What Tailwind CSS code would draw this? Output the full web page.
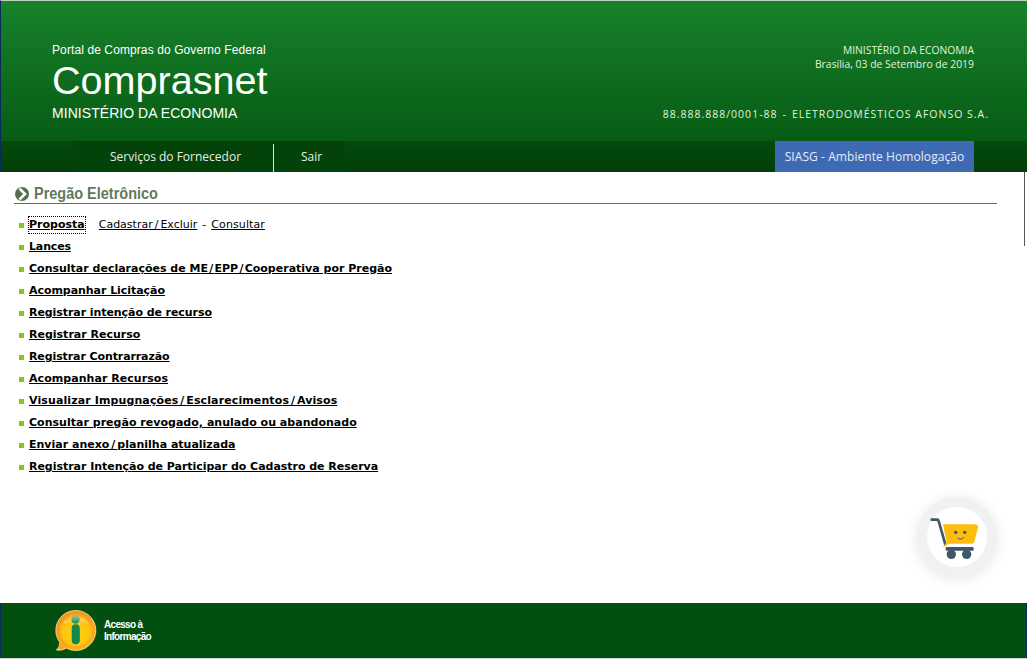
<!DOCTYPE html>
<html lang="pt-BR">
<head>
  <meta charset="UTF-8" />
  <title>Comprasnet</title>
  <script src="https://cdn.jsdelivr.net/npm/@tailwindcss/browser@4"></script>
</head>
<body class="relative h-[664px] overflow-hidden bg-white flex flex-col font-['DejaVu_Sans',sans-serif]">

  <!-- Cabecalho -->
  <header class="h-[141px] border-l border-[#0b2a5c] border-t border-t-[#c4cfc4] bg-gradient-to-b from-[#18822b] to-[#065c14] flex justify-between">
    <div class="pl-[51px] pt-[42px] text-white font-['Liberation_Sans',sans-serif]">
      <p class="text-[12px] leading-[14px] tracking-[0.1px]">Portal de Compras do Governo Federal</p>
      <p class="text-[39.6px] leading-[44px] mt-[1px]">Comprasnet</p>
      <p class="text-[14px] leading-[16px] mt-[3px] tracking-[0.05px]">MINISTÉRIO DA ECONOMIA</p>
    </div>
    <div class="pr-[38px] pt-[42px] flex flex-col items-end text-[#e2f2dc] font-['Open_Sans',sans-serif]">
      <p class="text-[10.3px] leading-[14px] mr-[15px]">MINISTÉRIO DA ECONOMIA</p>
      <p class="text-[10.4px] leading-[14px] mr-[15px]">Brasília, 03 de Setembro de 2019</p>
      <p class="text-[10.5px] leading-[14px] tracking-[1px] mt-[36px] flex">
        <span>88.888.888/0001-88</span><span class="mx-[5px]">-</span><span>ELETRODOMÉSTICOS AFONSO S.A.</span>
      </p>
    </div>
  </header>

  <!-- Menu -->
  <nav class="h-[31px] border-l border-[#0b2a5c] bg-gradient-to-b from-[#044a0e] to-[#023f08] flex font-['Open_Sans',sans-serif] text-[12px] text-[#e8efe8]">
    <div class="ml-[72px] w-[272px] flex bg-[#034209]">
      <a class="w-[200px] flex items-center justify-center pl-[5px]">Serviços do Fornecedor</a>
      <span class="w-px h-[28px] self-end bg-[#dfe8df]"></span>
      <a class="w-[71px] flex items-center pl-[27px]">Sair</a>
    </div>
    <div class="ml-[430px] w-[199px] bg-[#3e69b3] flex items-center justify-center text-[#e6edf8] tracking-[0.07px]">SIASG - Ambiente Homologação</div>
  </nav>

  <!-- Conteudo -->
  <main class="flex-1 relative pl-[14px] pr-[30px] pt-[13px]">
    <h1 class="flex items-center gap-[5px] h-[17px] mb-px text-[#5f7a5a] font-['Liberation_Sans',sans-serif] font-bold text-[16px]">
      <svg class="w-[14px] h-[14px] ml-px" viewBox="0 0 14 14">
        <circle cx="7" cy="7" r="7" fill="#56704f"/>
        <path d="M4.5 1.5 L10 7 L4.5 12.5" fill="none" stroke="#fff" stroke-width="2.6"/>
      </svg>
      <span class="scale-x-[0.905] origin-left">Pregão Eletrônico</span>
    </h1>
    <div class="h-px bg-[#5a7358]"></div>

    <ul class="mt-[10px] pl-[5px] text-[11px] text-black font-bold">
      <li class="h-[22px] flex items-center gap-[5px]"><span class="w-[5px] h-[5px] bg-[#8cc416]"></span><a class="underline outline-1 outline-dotted outline-black -outline-offset-1 px-px py-[1px] -mx-px">Proposta</a>
        <span class="ml-[9px] font-normal"><a class="underline">Cadastra<span class="tracking-[2px]">r/</span>Excluir</a><span class="mx-[1.5px]"> - </span><a class="underline tracking-[0.1px]">Consultar</a></span></li>
      <li class="h-[22px] flex items-center gap-[5px]"><span class="w-[5px] h-[5px] bg-[#8cc416]"></span><a class="underline tracking-[-0.15px]">Lances</a></li>
      <li class="h-[22px] flex items-center gap-[5px]"><span class="w-[5px] h-[5px] bg-[#8cc416]"></span><a class="underline">Consultar declarações de M<span class="tracking-[1.25px]">E/</span>EP<span class="tracking-[1.25px]">P/</span>Cooperativa por Pregão</a></li>
      <li class="h-[22px] flex items-center gap-[5px]"><span class="w-[5px] h-[5px] bg-[#8cc416]"></span><a class="underline tracking-[-0.05px]">Acompanhar Licitação</a></li>
      <li class="h-[22px] flex items-center gap-[5px]"><span class="w-[5px] h-[5px] bg-[#8cc416]"></span><a class="underline tracking-[-0.07px]">Registrar intenção de recurso</a></li>
      <li class="h-[22px] flex items-center gap-[5px]"><span class="w-[5px] h-[5px] bg-[#8cc416]"></span><a class="underline">Registrar Recurso</a></li>
      <li class="h-[22px] flex items-center gap-[5px]"><span class="w-[5px] h-[5px] bg-[#8cc416]"></span><a class="underline tracking-[-0.1px]">Registrar Contrarrazão</a></li>
      <li class="h-[22px] flex items-center gap-[5px]"><span class="w-[5px] h-[5px] bg-[#8cc416]"></span><a class="underline tracking-[0.05px]">Acompanhar Recursos</a></li>
      <li class="h-[22px] flex items-center gap-[5px]"><span class="w-[5px] h-[5px] bg-[#8cc416]"></span><a class="underline tracking-[0.11px]">Visualizar Impugnaçõe<span class="tracking-[2px]">s/</span>Esclarecimento<span class="tracking-[2px]">s/</span>Avisos</a></li>
      <li class="h-[22px] flex items-center gap-[5px]"><span class="w-[5px] h-[5px] bg-[#8cc416]"></span><a class="underline tracking-[0.02px]">Consultar pregão revogado, anulado ou abandonado</a></li>
      <li class="h-[22px] flex items-center gap-[5px]"><span class="w-[5px] h-[5px] bg-[#8cc416]"></span><a class="underline">Enviar anex<span class="tracking-[2px]">o/</span>planilha atualizada</a></li>
      <li class="h-[22px] flex items-center gap-[5px]"><span class="w-[5px] h-[5px] bg-[#8cc416]"></span><a class="underline tracking-[-0.03px]">Registrar Intenção de Participar do Cadastro de Reserva</a></li>
    </ul>

    <!-- linha da barra de rolagem -->
    <div class="absolute right-[2px] top-0 w-px h-[74px] bg-[#555]"></div>

    <!-- Carrinho flutuante -->
    <div class="absolute left-[917px] top-[325px] w-[80px] h-[80px] rounded-full bg-[#f1f1f1] shadow-[0_2px_14px_rgba(0,0,0,0.1)] flex items-center justify-center">
      <div class="w-[60px] h-[60px] rounded-full bg-white flex items-center justify-center">
        <svg class="w-[60px] h-[60px]" viewBox="80 80 180 180">
          <path d="M94 118 H110 Q114 118 115 122 L135 192" fill="none" stroke="#3f5767" stroke-width="8" stroke-linecap="round"/>
          <path d="M128 132 H224 Q233 132 233 142 L222 184 Q220 190 214 190 H146 L126 202 L139 186 Z" fill="#fdbd0b"/>
          <circle cx="166" cy="156" r="5" fill="#3f5767"/>
          <circle cx="193" cy="156" r="5" fill="#3f5767"/>
          <path d="M172 173 Q181 181 190 171" fill="none" stroke="#3f5767" stroke-width="3"/>
          <rect x="136" y="200" width="84" height="11" rx="3" fill="#3f5767"/>
          <circle cx="153" cy="222" r="14" fill="#3f5767"/>
          <circle cx="199" cy="222" r="14" fill="#3f5767"/>
          <rect x="168" y="212" width="17" height="10" fill="#fff"/>
        </svg>
      </div>
    </div>
  </main>

  <!-- Rodape -->
  <footer class="h-[55px] border-x border-[#0b2a5c] bg-[#024f10] flex items-center pl-[54px]">
    <svg class="w-[42px] h-[42px]" viewBox="0 0 44 44">
      <defs>
        <linearGradient id="bolha" x1="0.2" y1="0" x2="0.7" y2="1">
          <stop offset="0" stop-color="#f58f1e"/>
          <stop offset="1" stop-color="#fbb415"/>
        </linearGradient>
        <radialGradient id="miolo" cx="0.5" cy="0.6" r="0.55">
          <stop offset="0" stop-color="#ffd40f"/>
          <stop offset="0.75" stop-color="#fdc40f"/>
          <stop offset="1" stop-color="#f8a91a"/>
        </radialGradient>
        <linearGradient id="ponto" x1="0" y1="0" x2="0" y2="1">
          <stop offset="0" stop-color="#8fc9a0"/>
          <stop offset="1" stop-color="#1b8a4d"/>
        </linearGradient>
      </defs>
      <path d="M1.5 42 Q5 39 5 34 A21 21 0 1 1 12 40 Q7 43 1.5 42 Z" fill="url(#bolha)" stroke="#ffe9ad" stroke-width="0.8"/>
      <circle cx="22" cy="21" r="17" fill="url(#miolo)"/>
      <path d="M8 15 A16 16 0 0 1 36 15 Q22 8 8 15 Z" fill="#fff" fill-opacity="0.28"/>
      <circle cx="21.5" cy="10" r="4.3" fill="url(#ponto)"/>
      <rect x="17.5" y="15" width="8.5" height="21" rx="4.2" fill="#12894a"/>
    </svg>
    <p class="ml-[7px] text-[10px] leading-[12px] font-bold text-white tracking-[-0.7px] font-['Liberation_Sans',sans-serif]">Acesso à<br>Informação</p>
  </footer>
  <div class="h-[6px] border-t border-[#d5d5d5]"></div>
</body>
</html>
